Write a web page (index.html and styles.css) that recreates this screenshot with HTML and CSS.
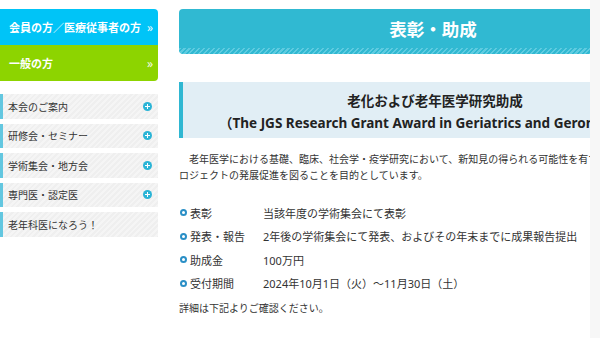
FILE: index.html
```html
<!DOCTYPE html>
<html lang="ja">
<head>
  <meta charset="UTF-8">
  <meta name="viewport" content="width=device-width, initial-scale=1.0">
  <title>表彰・助成</title>
  <link rel="stylesheet" href="styles.css">
</head>
<body>
  <div class="page">
    <aside class="side">
      <div class="member-nav">
        <a class="member-btn btn-blue" href="#">会員の方／医療従事者の方<span class="arrow">»</span></a>
        <a class="member-btn btn-green" href="#">一般の方<span class="arrow">»</span></a>
      </div>
      <ul class="menu">
        <li><span>本会のご案内</span><i class="plus"></i></li>
        <li><span>研修会・セミナー</span><i class="plus"></i></li>
        <li><span>学術集会・地方会</span><i class="plus"></i></li>
        <li><span>専門医・認定医</span><i class="plus"></i></li>
        <li><span>老年科医になろう！</span></li>
      </ul>
    </aside>

    <main class="main">
      <div class="main-inner">
        <h1 class="page-title">表彰・助成</h1>

        <div class="grant-title">
          <div>老化および老年医学研究助成</div>
          <div>（The JGS Research Grant Award in Geriatrics and Gerontology）</div>
        </div>

        <p class="lead">老年医学における基礎、臨床、社会学・疫学研究において、新知見の得られる可能性を有する研究プロジェクトの発展促進を図ることを目的としています。</p>

        <ul class="info">
          <li><span class="label">表彰</span><span>当該年度の学術集会にて表彰</span></li>
          <li><span class="label">発表・報告</span><span>2年後の学術集会にて発表、およびその年末までに成果報告提出</span></li>
          <li><span class="label">助成金</span><span>100万円</span></li>
          <li><span class="label">受付期間</span><span>2024年10月1日（火）～11月30日（土）</span></li>
        </ul>

        <p class="note">詳細は下記よりご確認ください。</p>
      </div>
    </main>

    <div class="edge"></div>
  </div>
</body>
</html>
```

FILE: styles.css
```css
html, body {
  margin: 0;
  padding: 0;
  background: #fff;
}

body {
  font-family: "Noto Sans", "Noto Sans CJK JP", sans-serif;
  color: #333;
  overflow: hidden;
}

.page {
  display: flex;
  height: 338px;
  box-sizing: border-box;
  padding-top: 9px;
}

/* sidebar */

.side {
  width: 158px;
  flex-shrink: 0;
  margin-right: 21px;
}

.member-nav {
  border-radius: 0 4px 4px 0;
  overflow: hidden;
}

.member-btn {
  display: flex;
  align-items: center;
  justify-content: space-between;
  height: 36px;
  padding: 0 5px 0 9px;
  color: #fff;
  font-size: 11px;
  font-weight: bold;
  text-decoration: none;
}

.member-btn .arrow {
  font-size: 12px;
  font-weight: normal;
  opacity: 0.9;
}

.btn-blue { background-color: #00c4f7; }
.btn-green { background-color: #8dd400; }

.menu {
  list-style: none;
  margin: 13px 0 0;
  padding: 0;
}

.menu li {
  display: flex;
  align-items: center;
  justify-content: space-between;
  height: 24.5px;
  margin-bottom: 5px;
  padding: 0 6px 0 5px;
  border-left: 3px solid #63c7e0;
  background: repeating-linear-gradient(135deg, #f5f5f5 0 2px, #efefef 2px 4px);
  font-size: 10px;
  color: #333;
}

.plus {
  position: relative;
  width: 9px;
  height: 9px;
  border-radius: 50%;
  background: #2ab4d6;
}

.plus::before,
.plus::after {
  content: "";
  position: absolute;
  background: #fff;
  left: 2px;
  top: 4px;
  width: 5px;
  height: 1px;
}

.plus::after {
  left: 4px;
  top: 2px;
  width: 1px;
  height: 5px;
}

/* main */

.main {
  width: 411px;
  flex-shrink: 0;
  overflow: hidden;
}

.main-inner {
  width: 508px;
}

.page-title {
  margin: 0;
  height: 45px;
  line-height: 40px;
  border-radius: 4px;
  background:
    repeating-linear-gradient(135deg, #5fcbe0 0 1.5px, #30b9d2 1.5px 3.5px) bottom / 100% 6px no-repeat,
    #30b9d2;
  color: #fff;
  text-align: center;
  font-size: 17.5px;
  font-weight: bold;
}

.grant-title {
  margin-top: 28px;
  padding: 8px 0 4px;
  border-left: 4px solid #2fb7d2;
  background: #e1eef5;
  text-align: center;
  font-size: 13.5px;
  font-weight: bold;
  line-height: 22px;
  color: #222;
}

.lead {
  width: 461px;
  margin: 13px 0 0;
  text-indent: 1em;
  font-size: 10px;
  line-height: 16px;
}

.info {
  list-style: none;
  margin: 18px 0 0;
  padding: 0;
  font-size: 11px;
}

.info li {
  display: flex;
  align-items: center;
  height: 23.5px;
  padding-left: 1px;
}

.info li::before {
  content: "";
  width: 3px;
  height: 3px;
  border: 2px solid #2a8fc6;
  border-radius: 50%;
  margin-right: 3px;
}

.info .label {
  width: 73px;
  flex-shrink: 0;
}

.note {
  margin: 5px 0 0;
  font-size: 10px;
  line-height: 16px;
}

.edge {
  width: 10px;
  flex-shrink: 0;
  margin-top: -9px;
  background: #f7f7f7;
}
```
